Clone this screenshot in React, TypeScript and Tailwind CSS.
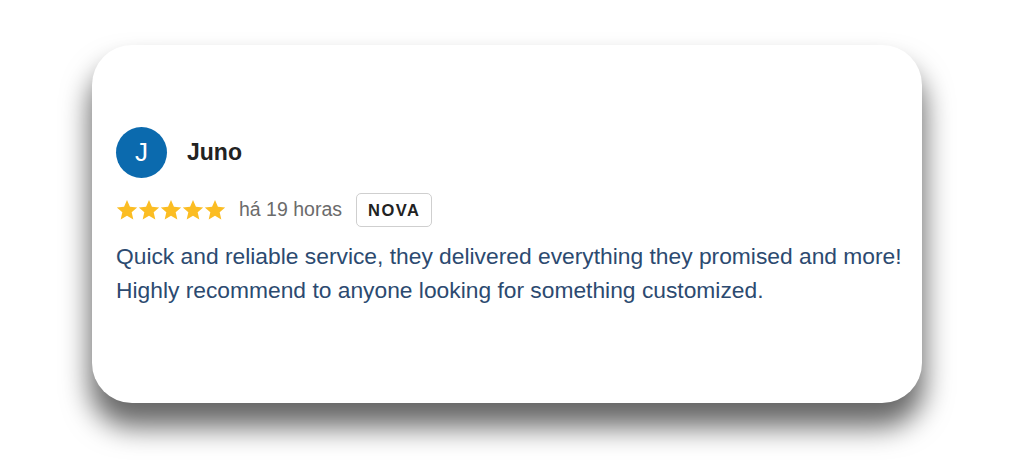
import React from 'react'

function Star() {
  return (
    <svg width="22" height="22" viewBox="0 0 24 24" className="fill-[#fbbd23]">
      <path d="M12 1.2l3.2 7.3 7.9.7-6 5.3 1.8 7.8L12 18.2l-6.9 4.1 1.8-7.8-6-5.3 7.9-.7z" />
    </svg>
  )
}

export default function App() {
  return (
    <div className="w-[1023px] h-[468px] bg-white flex font-['Liberation_Sans',Arial,sans-serif]">
      <div className="ml-[92px] mt-[45px] w-[830px] h-[358px] bg-white rounded-[40px] shadow-[0_22px_28px_2px_rgba(0,0,0,0.6)] px-6 pt-[82px]">
        <div className="flex items-center gap-5">
          <div className="w-[51px] h-[51px] rounded-full bg-[#0b6aae] flex items-center justify-center text-white text-[26px]">
            J
          </div>
          <span className="text-[23px] font-bold text-[#222]">Juno</span>
        </div>

        <div className="flex items-center mt-[15px]">
          <div className="flex">
            <Star />
            <Star />
            <Star />
            <Star />
            <Star />
          </div>
          <span className="ml-[13px] text-[19.5px] text-[#6b6b6b]">há 19 horas</span>
          <span className="ml-[14px] h-[34px] px-[11px] flex items-center border border-[#cfcfcf] rounded-[5px] text-[16.5px] font-bold tracking-[1.5px] text-[#222]">
            NOVA
          </span>
        </div>

        <p className="mt-[12px] text-[22.8px] leading-[34px] text-[#2c4a70] whitespace-nowrap">
          Quick and reliable service, they delivered everything they promised and more!
          <br />
          Highly recommend to anyone looking for something customized.
        </p>
      </div>
    </div>
  )
}
